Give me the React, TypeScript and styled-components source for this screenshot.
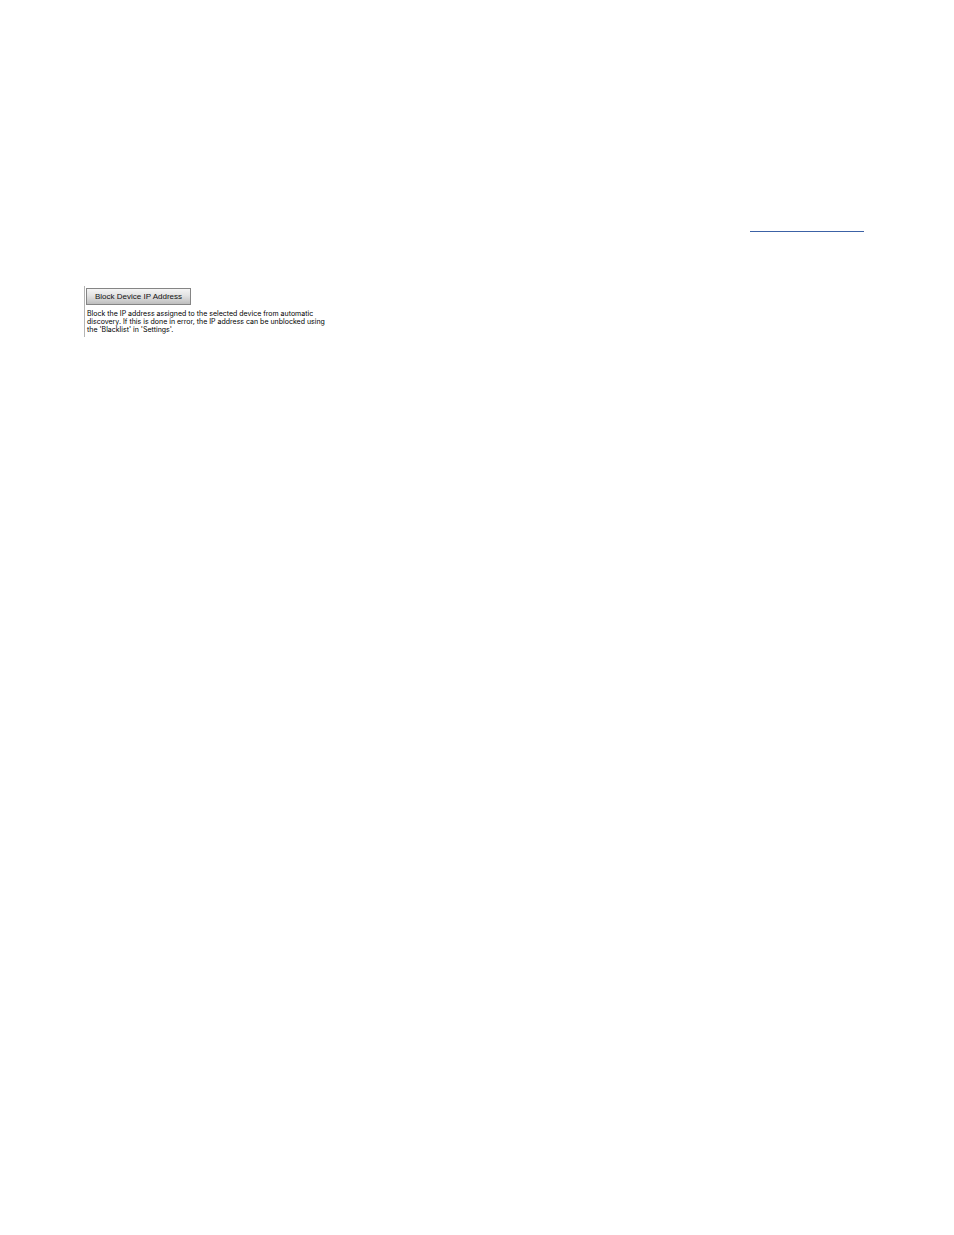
import React from "react";

import styled, { createGlobalStyle } from "styled-components";

const App = () => {
    return (
        <>
            <GlobalStyle />
            <StyledPage>
                <StyledHeaderRule />
                <StyledActionPanel>
                    <StyledBlockButton type="button" aria-describedby="block-description">
                        Block Device IP Address
                    </StyledBlockButton>
                    <StyledDescription id="block-description">
                        Block the IP address assigned to the selected device from automatic
                        <br />
                        discovery. If this is done in error, the IP address can be unblocked using
                        <br />
                        the 'Blacklist' in 'Settings'.
                    </StyledDescription>
                </StyledActionPanel>
            </StyledPage>
        </>
    );
};

const GlobalStyle = createGlobalStyle`
    body {
        margin: 0;
        background: #ffffff;
        color: #000000;
        font-family: "Liberation Sans", Arial, sans-serif;
    }
`;

const StyledPage = styled.main`
    display: flex;
    flex-direction: column;
    box-sizing: border-box;
    min-height: 100vh;
    padding: 231px 90px 0 84px;
`;

const StyledHeaderRule = styled.hr`
    width: 114px;
    height: 1px;
    margin: 0 0 54px auto;
    border: 0;
    background: #3c62a6;
`;

const StyledActionPanel = styled.section`
    box-sizing: border-box;
    padding: 2px 0 3px 1px;
    border-left: 1px solid #b4b4b4;
`;

const StyledBlockButton = styled.button`
    display: block;
    box-sizing: border-box;
    height: 17px;
    padding: 0 8px;
    border: 1px solid #858585;
    border-radius: 0;
    background: linear-gradient(#f4f4f4, #e2e2e2 45%, #bebebe);
    color: #111111;
    font-family: inherit;
    font-size: 8px;
    line-height: 15px;
`;

const StyledDescription = styled.p`
    margin: 5px 0 0;
    padding-left: 1px;
    font-family: Inter, "Liberation Sans", sans-serif;
    font-size: 7px;
    line-height: 8px;
`;

export default App;
